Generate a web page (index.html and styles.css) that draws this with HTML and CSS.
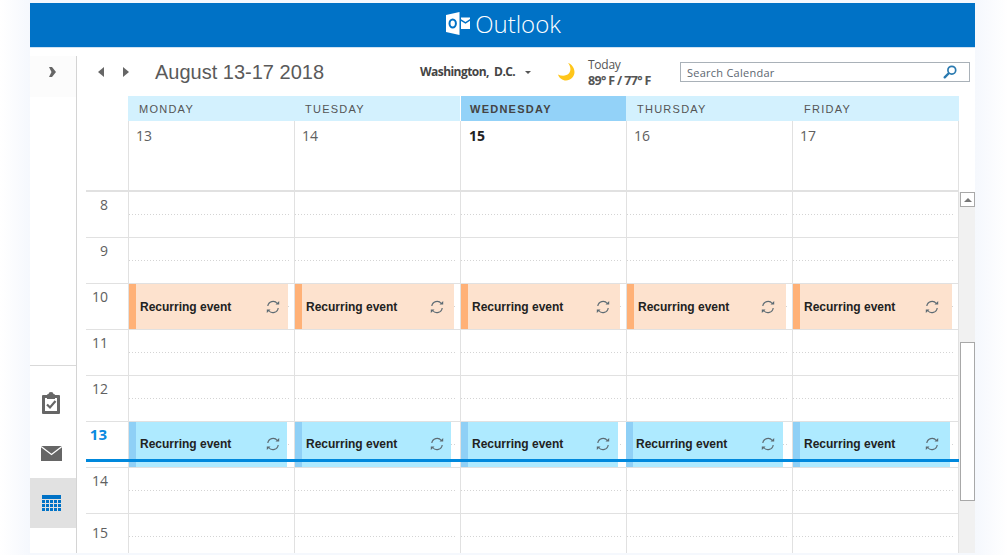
FILE: index.html
```html
<!DOCTYPE html>
<html lang="en">
<head>
<meta charset="utf-8">
<title>Outlook Calendar</title>
<link rel="stylesheet" href="styles.css">
</head>
<body>
<div class="app">
  <header class="brand">
    <svg class="brand-logo" width="24" height="23" viewBox="0 0 24 23"><path fill="#fff" d="M0 3 13.500 0v23L0 20z"/><path fill="#fff" d="M15 5.500h9v1.600l-4.500 3-4.500-2.800zM15 8.900l4.500 2.800L24 8.700V17h-9z"/><ellipse cx="6.700" cy="11.500" rx="3.200" ry="3.900" fill="none" stroke="#0072c6" stroke-width="2"/></svg>
    <span class="brand-name">Outlook</span>
  </header>
  <div class="content">
    <aside class="rail">
      <div class="rail-top">
        <svg width="7" height="10" viewBox="0 0 7 10"><path fill="#666" d="M0 0h3l4 5-4 5H0l2.500-5z"/></svg>
      </div>
      <div class="rail-tools">
        <div class="rail-btn">
          <svg width="18" height="22" viewBox="0 0 18 22"><path fill="#666" d="M1 3h4V2.500L6.500 2a2.500 2 0 0 1 5 0l1.500.5V3h4a1 1 0 0 1 1 1v17a1 1 0 0 1-1 1H1a1 1 0 0 1-1-1V4a1 1 0 0 1 1-1z"/><path fill="#fff" d="M3 6h12v13H3z"/><path fill="#666" d="M5 3.500h8V7H5z"/><path fill="none" stroke="#666" stroke-width="2.200" d="m5 12.500 3 3 5.500-6.500"/></svg>
        </div>
        <div class="rail-btn">
          <svg width="21" height="15" viewBox="0 0 21 15"><path fill="#666" d="M0 0h21v15H0z"/><path fill="none" stroke="#fff" stroke-width="1.300" d="m0 .5 10.500 8L21 .5"/></svg>
        </div>
        <div class="rail-btn rail-btn-on">
          <svg width="19" height="16" viewBox="0 0 19 16"><path fill="#0072c6" d="M0 0h19v4H0zM0 5h3v3H0zM4 5h3v3H4zM8 5h3v3H8zM12 5h3v3h-3zM16 5h3v3h-3zM0 9h3v3H0zM4 9h3v3H4zM8 9h3v3H8zM12 9h3v3h-3zM16 9h3v3h-3zM0 13h3v3H0zM4 13h3v3H4zM8 13h3v3H8zM12 13h3v3h-3zM16 13h3v3h-3z"/></svg>
        </div>
      </div>
    </aside>
    <main class="main">
      <div class="toolbar">
        <div class="nav">
          <svg width="8" height="10" viewBox="0 0 8 10"><path fill="#666" d="M7 0v10L1 5z"/></svg>
          <svg width="8" height="10" viewBox="0 0 8 10"><path fill="#666" d="M1 0v10l6-5z"/></svg>
        </div>
        <h1 class="range">August 13-17 2018</h1>
        <div class="place">Washington,&nbsp; D.C.<span class="caret"></span></div>
        <svg class="moon" width="18" height="18" viewBox="0 0 18 18"><path fill="#ffc61a" d="M11 0c3 3.500 3.200 8 .8 10.600C9.500 13 5 13.500 1 11.500 2 15 5.500 17.500 9 17.500c4.500 0 8.500-3.700 8.500-8.500C17.500 5 14.800 1.200 11 0z"/></svg>
        <div class="weather">
          <div class="weather-day">Today</div>
          <div class="weather-temp">89° F / 77° F</div>
        </div>
        <div class="search">
          <span class="search-label">Search Calendar</span>
          <svg width="14" height="14" viewBox="0 0 14 14"><circle cx="8.800" cy="5.200" r="3.900" fill="none" stroke="#2a7ab0" stroke-width="1.700"/><path stroke="#2a7ab0" stroke-width="2.400" stroke-linecap="round" d="M5.500 8.500 1.700 12.300"/></svg>
        </div>
      </div>

      <div class="week">
        <div class="head">
          <div class="head-gutter"></div>
          <div class="head-day">MONDAY</div>
          <div class="head-day">TUESDAY</div>
          <div class="head-day head-day-now">WEDNESDAY</div>
          <div class="head-day">THURSDAY</div>
          <div class="head-day">FRIDAY</div>
        </div>
        <div class="dates">
          <div class="head-gutter"></div>
          <div class="date">13</div>
          <div class="date">14</div>
          <div class="date date-now">15</div>
          <div class="date">16</div>
          <div class="date">17</div>
        </div>
      </div>

      <div class="lower">
        <div class="rows">
          <div class="row">
            <div class="hour">8</div>
            <div class="cell"><div class="half"></div></div><div class="cell"><div class="half"></div></div><div class="cell"><div class="half"></div></div><div class="cell"><div class="half"></div></div><div class="cell"><div class="half"></div></div>
          </div>
          <div class="row">
            <div class="hour">9</div>
            <div class="cell"><div class="half"></div></div><div class="cell"><div class="half"></div></div><div class="cell"><div class="half"></div></div><div class="cell"><div class="half"></div></div><div class="cell"><div class="half"></div></div>
          </div>
          <div class="row row-peach">
            <div class="hour">10</div>
            <div class="cell"><div class="half"></div><div class="event">Recurring event<svg class="sync"><use href="#sync"/></svg></div></div>
            <div class="cell"><div class="half"></div><div class="event">Recurring event<svg class="sync"><use href="#sync"/></svg></div></div>
            <div class="cell"><div class="half"></div><div class="event">Recurring event<svg class="sync"><use href="#sync"/></svg></div></div>
            <div class="cell"><div class="half"></div><div class="event">Recurring event<svg class="sync"><use href="#sync"/></svg></div></div>
            <div class="cell"><div class="half"></div><div class="event">Recurring event<svg class="sync"><use href="#sync"/></svg></div></div>
          </div>
          <div class="row">
            <div class="hour">11</div>
            <div class="cell"><div class="half"></div></div><div class="cell"><div class="half"></div></div><div class="cell"><div class="half"></div></div><div class="cell"><div class="half"></div></div><div class="cell"><div class="half"></div></div>
          </div>
          <div class="row">
            <div class="hour">12</div>
            <div class="cell"><div class="half"></div></div><div class="cell"><div class="half"></div></div><div class="cell"><div class="half"></div></div><div class="cell"><div class="half"></div></div><div class="cell"><div class="half"></div></div>
          </div>
          <div class="row row-sky">
            <div class="hour hour-now">13</div>
            <div class="cell"><div class="half"></div><div class="event">Recurring event<svg class="sync"><use href="#sync"/></svg></div></div>
            <div class="cell"><div class="half"></div><div class="event">Recurring event<svg class="sync"><use href="#sync"/></svg></div></div>
            <div class="cell"><div class="half"></div><div class="event">Recurring event<svg class="sync"><use href="#sync"/></svg></div></div>
            <div class="cell"><div class="half"></div><div class="event">Recurring event<svg class="sync"><use href="#sync"/></svg></div></div>
            <div class="cell"><div class="half"></div><div class="event">Recurring event<svg class="sync"><use href="#sync"/></svg></div></div>
            <div class="now-line"></div>
          </div>
          <div class="row">
            <div class="hour">14</div>
            <div class="cell"><div class="half"></div></div><div class="cell"><div class="half"></div></div><div class="cell"><div class="half"></div></div><div class="cell"><div class="half"></div></div><div class="cell"><div class="half"></div></div>
          </div>
          <div class="row row-last">
            <div class="hour hour-low">15</div>
            <div class="cell"><div class="half"></div></div><div class="cell"><div class="half"></div></div><div class="cell"><div class="half"></div></div><div class="cell"><div class="half"></div></div><div class="cell"><div class="half"></div></div>
          </div>
        </div>
        <div class="scroll">
          <div class="scroll-up"></div>
          <div class="scroll-thumb"></div>
        </div>
      </div>
    </main>
  </div>
</div>
<svg class="defs" width="0" height="0" aria-hidden="true">
  <symbol id="sync" viewBox="0 0 14 14">
    <path fill="none" stroke="#5d6b73" stroke-width="1.200" d="M1.800 6A5.300 5.300 0 0 1 11.300 3.500M12.200 8A5.300 5.300 0 0 1 2.700 10.500"/>
    <path fill="#5d6b73" d="M9.500 4.600h3.700V.9zM4.500 9.400H.8v3.700z"/>
  </symbol>
</svg>
</body>
</html>
```
FILE: styles.css
```css
* { box-sizing: border-box; }
html, body { height: 100%; }
body {
  margin: 0;
  height: 555px;
  padding: 3px 33px 2px 30px;
  overflow: hidden;
  background: linear-gradient(90deg, #fff 0, #f5f8fd 30px, #f5f8fd 975px, #fff 1008px);
  font-family: "Liberation Sans", Arial, sans-serif;
  color: #555;
}
.defs { position: absolute; }
.app { height: 550px; display: flex; flex-direction: column; background: #fff; overflow: hidden; }

.brand {
  height: 45px;
  flex: none;
  background: #0072c6;
  border-bottom: 1px solid #cfe2f2;
  display: flex;
  align-items: center;
  justify-content: center;
  gap: 5px;
  padding: 0 0 3px 2px;
}
.brand-logo { flex: none; }
.brand-name { font: 300 24px/1 "Open Sans", sans-serif; color: #fff; }

.content { flex: 1; display: flex; min-height: 0; }

.rail { width: 47px; flex: none; display: flex; flex-direction: column; margin-top: 8px; border-right: 1px solid #d4d4d4; }
.rail-top { height: 41px; background: #fcfcfc; display: flex; align-items: flex-start; justify-content: center; padding: 11px 2px 0 0; }
.rail-tools { margin-top: auto; border-top: 1px solid #d9d9d9; padding: 12px 0 25px; }
.rail-btn { height: 50px; display: flex; align-items: center; justify-content: center; padding-right: 4px; }
.rail-btn-on { background: #e1e1e1; }

.main { flex: 1; min-width: 0; display: flex; flex-direction: column; padding-left: 9px; }

.toolbar { height: 48px; flex: none; display: flex; align-items: center; padding: 0 5px 1px 0; }
.nav { display: flex; gap: 17px; margin-left: 11px; width: 58px; }
.range { margin: 0; width: 265px; font: 400 20px/1 "Liberation Sans", Arial, sans-serif; color: #5a5a5a; }
.place { width: 137px; display: flex; align-items: center; padding-top: 1px; font: 700 12px/1 "Open Sans", sans-serif; color: #444; letter-spacing: -.55px; }
.caret { margin-left: 10px; border: 3px solid transparent; border-top-color: #555; border-bottom: 0; }
.moon { flex: none; margin-right: 13px; }
.weather { width: 92px; padding-top: 3px; font: 12px/16px "Open Sans", sans-serif; color: #555; }
.weather-day { letter-spacing: -.25px; }
.weather-temp { font-weight: 700; font-size: 12.500px; letter-spacing: -.65px; }
.search { flex: 1; height: 20px; border: 1px solid #a9b1b8; display: flex; align-items: center; justify-content: space-between; padding: 0 12px 0 6px; }
.search-label { padding-top: 1px; font: 11px/1 "Open Sans", sans-serif; color: #5c6670; letter-spacing: .25px; }

.week { flex: none; }
.head, .dates, .row { display: grid; grid-template-columns: 42px repeat(5, 166px); width: 873px; }
.head { height: 25px; }
.head-day { height: 25px; background: #d3f1fe; font-size: 11px; line-height: 24px; letter-spacing: 1.250px; padding: 1px 0 0 11px; color: #555; }
.head-day:last-child { padding-left: 12px; margin-right: -1px; }
.head-day-now { background: #93d2f8; font-weight: 700; color: #444; padding-left: 9px; margin-left: 1px; }
.dates { height: 71px; border-bottom: 2px solid #e1e1e1; border-right: 1px solid #e1e1e1; }
.date { border-left: 1px solid #e1e1e1; font: 14px/1 "Open Sans", sans-serif; color: #606060; padding: 8px 0 0 7px; }
.date-now { font-weight: 700; color: #222; padding-left: 8px; }

.lower { flex: 1; min-height: 0; display: flex; }
.rows { width: 873px; flex: none; overflow: hidden; }
.row { height: 46px; position: relative; border-bottom: 1px solid #e1e1e1; border-right: 1px solid #e1e1e1; }
.row-last { border-bottom: 0; height: 39px; }
.hour { font: 14px/1 "Open Sans", sans-serif; color: #606060; text-align: right; padding: 6px 20px 0 0; }
.hour-now { font-weight: 700; font-size: 15px; color: #0a8ae0; padding: 5px 21px 0 0; }
.hour-low { padding-top: 12px; }
.cell { border-left: 1px solid #e1e1e1; position: relative; }
.half { height: 23px; margin-right: 3px; background: linear-gradient(90deg, #d4d4d4 1px, transparent 1px) left bottom / 3px 1px repeat-x; }

.event {
  position: absolute;
  left: 0; top: 0; bottom: 0;
  width: 159px;
  display: flex;
  align-items: center;
  justify-content: space-between;
  padding: 0 8px 0 4px;
  border-left: 7px solid;
  font-size: 12px;
  font-weight: 700;
  color: #222;
}
.row-peach .event { background: #fde2ce; border-left-color: #ffb177; }
.row-peach .cell:nth-child(3) .event,
.row-peach .cell:nth-child(4) .event { padding-right: 10px; }
.row-peach .cell:nth-child(5) .event { padding-right: 11px; }
.row-peach .cell:nth-child(6) .event { padding-right: 13px; }

.row-sky .event { background: #aeeaff; border-left-color: #8fd0f6; padding: 0 7px 1px 4px; width: 157px; }
.row-sky .cell:nth-child(2) .event { width: 158px; }
.row-sky .cell:nth-child(3) .event { width: 156px; }
.row-sky .cell:nth-child(4) .event { padding-right: 8px; }
.row-sky .cell:nth-child(5) .event { left: -1px; padding: 0 8px 1px 3px; }
.row-sky .cell:nth-child(6) .event { padding-right: 11px; }
.sync { width: 14px; height: 14px; flex: none; }
.now-line { position: absolute; left: 0; right: -1px; top: 37px; height: 3px; background: #0088dc; }

.scroll { width: 16px; flex: none; background: #f1f1f1; padding-left: 1px; display: flex; flex-direction: column; }
.scroll-up { height: 15px; border: 1px solid #a8a8a8; background: #fff; display: flex; align-items: center; justify-content: center; flex: none; }
.scroll-up::before { content: ""; border: 4px solid transparent; border-top: 0; border-bottom: 4px solid #777; }
.scroll-thumb { margin-top: 135px; height: 159px; border: 1px solid #a8a8a8; background: #fff; flex: none; }
```
